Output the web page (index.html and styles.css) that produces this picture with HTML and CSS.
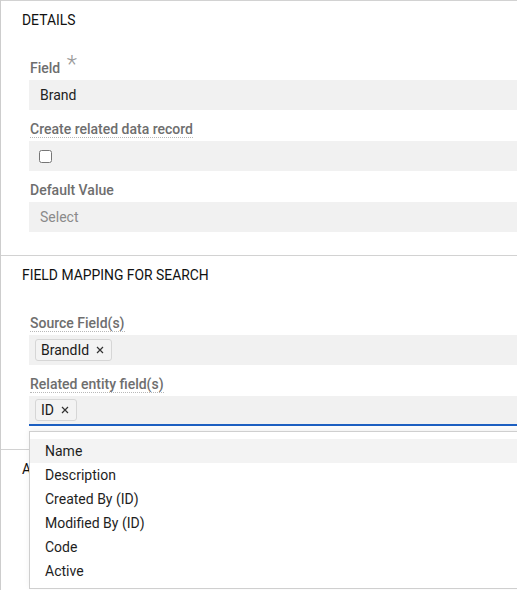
FILE: index.html
```html
<!DOCTYPE html>
<html lang="en">
<head>
    <meta charset="UTF-8">
    <meta name="viewport" content="width=device-width, initial-scale=1.0">
    <title>Lookup Field</title>
    <link rel="stylesheet" href="styles.css">
</head>
<body>
    <div class="panel">
        <section class="section">
            <h2 class="section-title">DETAILS</h2>
            <div class="form">
                <div class="form-group">
                    <label class="label">Field <span class="req">*</span></label>
                    <div class="input">Brand</div>
                </div>
                <div class="form-group">
                    <label class="label"><span class="hint">Create related data record</span></label>
                    <div class="input">
                        <input type="checkbox" class="check">
                    </div>
                </div>
                <div class="form-group">
                    <label class="label">Default Value</label>
                    <div class="input placeholder">Select</div>
                </div>
            </div>
        </section>

        <section class="section">
            <h2 class="section-title">FIELD MAPPING FOR SEARCH</h2>
            <div class="form">
                <div class="form-group">
                    <label class="label"><span class="hint">Source Field(s)</span></label>
                    <div class="input tags">
                        <span class="chip">BrandId
                            <svg class="chip-x" viewBox="0 0 8 8"><path d="M1 1L7 7M7 1L1 7"/></svg>
                        </span>
                    </div>
                </div>
                <div class="form-group">
                    <label class="label"><span class="hint">Related entity field(s)</span></label>
                    <div class="input tags focused">
                        <span class="chip">ID
                            <svg class="chip-x" viewBox="0 0 8 8"><path d="M1 1L7 7M7 1L1 7"/></svg>
                        </span>

                        <!-- options list, open under the focused field -->
                        <ul class="menu">
                            <li class="menu-item active">Name</li>
                            <li class="menu-item">Description</li>
                            <li class="menu-item">Created By (ID)</li>
                            <li class="menu-item">Modified By (ID)</li>
                            <li class="menu-item">Code</li>
                            <li class="menu-item">Active</li>
                        </ul>
                    </div>
                </div>
            </div>
        </section>

        <section class="section last">
            <h2 class="section-title">ADVANCED</h2>
        </section>
    </div>
</body>
</html>
```

FILE: styles.css
```css
* {
    margin: 0;
    padding: 0;
    box-sizing: border-box;
}

html, body {
    overflow: hidden;
}

body {
    font-family: Roboto, "Liberation Sans", sans-serif;
    font-size: 14px;
    color: #222;
    background: white;
}

.panel {
    border-left: 1px solid #cdcdcd;
    height: 100vh;
}

.section {
    border-top: 1px solid #d2d2d2;
    padding: 9px 0 14px 21px;
}

.section-title {
    font-size: 13.9px;
    font-weight: 400;
    line-height: 20px;
    color: #111;
    margin-bottom: 28px;
}

.form {
    padding-left: 7px;
}

.form-group {
    margin-bottom: 9px;
}

.label {
    display: block;
    line-height: 20px;
    margin-bottom: 2px;
    padding-left: 1px;
    font-weight: 500;
    color: #6e6e6e;
}

.hint {
    border-bottom: 1px dotted #b8b8b8;
}

.req {
    font-size: 24px;
    font-weight: 300;
    color: #9a9a9a;
    vertical-align: top;
    line-height: 14px;
    position: relative;
    top: -1px;
    margin-left: 3px;
}

.input {
    position: relative;
    height: 30px;
    background: #f1f1f1;
    padding: 0 11px;
    display: flex;
    align-items: center;
    color: #222;
}

.input.placeholder {
    color: #8a8a8a;
}

.check {
    width: 13px;
    height: 13px;
    margin: 0 0 0 -1px;
}

.input.tags {
    padding: 0 6px;
}

.input.focused {
    border-bottom: 2px solid #1d60c2;
}

.chip {
    display: inline-flex;
    align-items: center;
    gap: 7px;
    height: 22px;
    padding: 0 7px 0 5px;
    border: 1px solid #d6d6d6;
    border-radius: 3px;
    background: #f3f3f3;
    color: #1a1a1a;
}

.chip-x {
    width: 8px;
    height: 8px;
    stroke: #333;
    stroke-width: 1.2;
    fill: none;
}

.menu {
    position: absolute;
    left: 0;
    right: -20px;
    top: calc(100% + 7px);
    list-style: none;
    background: white;
    border: 1px solid #cfcfcf;
    padding: 7px 0 5px;
    box-shadow: 0 -2px 6px rgba(0, 0, 0, 0.06);
    z-index: 5;
}

.menu-item {
    height: 24px;
    line-height: 24px;
    padding-left: 15px;
    color: #1e1e1e;
}

.menu-item.active {
    background: #f3f3f3;
}
```
